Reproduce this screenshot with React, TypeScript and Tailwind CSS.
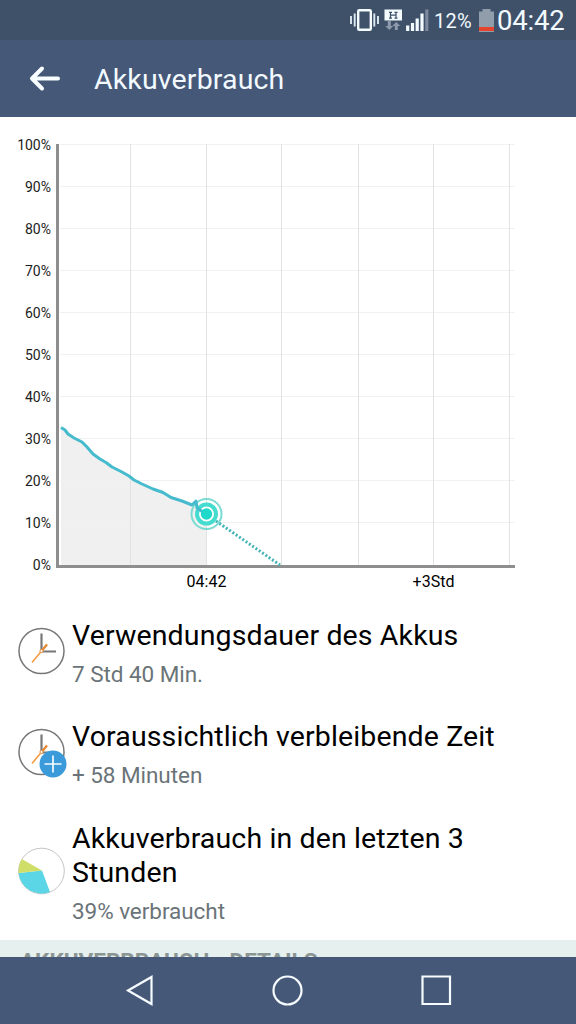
import type { ReactNode } from "react";

const levels = [100, 90, 80, 70, 60, 50, 40, 30, 20, 10, 0];
const gridX = [74.5, 150.5, 225.5, 302.5, 377.5, 453.5];

const StatusBar = () => {
    return (
        <div className="flex h-10 shrink-0 items-center bg-[#3f5069] pl-[350px] text-[#f2faff]">
            <svg width="79" height="26" viewBox="0 0 79 26" className="shrink-0">
                <rect x="8.2" y="3.2" width="12.6" height="19.6" rx="1" fill="none" stroke="#f4fbff" strokeWidth="2.4" />
                <path d="M1 9v8M4.7 6.5v13M24.3 6.5v13M28 9v8" stroke="#dce8f2" strokeWidth="1.9" />
                <rect x="34.5" y="2.5" width="17.5" height="11" fill="#f4fbff" />
                <path d="M40.5 5v6.5M46 5v6.5M40.5 8.2h5.5M39 5.3h3M39 11.2h3M44.5 5.3h3M44.5 11.2h3" stroke="#3f5069" strokeWidth="1.2" />
                <path d="M37.8 14v5h-2.5l4 4 4-4h-2.5v-5zM44.8 23v-4h-2.5l4-4 4 4h-2.5v4z" fill="#8d9aab" />
                <path d="M57.7 18.5V24M62.5 16v8M67.2 11.5V24M72 6.5V24" stroke="#f4fbff" strokeWidth="3.2" />
                <path d="M76.8 2.5V24" stroke="#7d8a9d" strokeWidth="3.2" />
            </svg>
            <span className="ml-[5px] mt-[2px] w-[45px] text-[20px] tracking-[0.2px]">12%</span>
            <svg width="15" height="24" viewBox="0 0 15 24" className="shrink-0">
                <path d="M3.5 1h8v2.5H15V24H0V3.5h3.5z" fill="#919daa" />
                <path d="M0 19h15v4H0z" fill="#e5432c" />
            </svg>
            <span className="ml-[3px] mt-[2px] text-[27.5px] tracking-[-0.2px]">04:42</span>
        </div>
    );
};

const Header = () => {
    return (
        <header className="flex h-[77px] shrink-0 items-center bg-[#465877] pl-7 text-[#f2faff]">
            <svg width="34" height="28" viewBox="0 0 34 28" fill="none" stroke="#f8fdff" strokeWidth="4" strokeLinecap="round" strokeLinejoin="round">
                <path d="M30 13.5H4M14 3.5L4 13.5L14 23.5" />
            </svg>
            <h1 className="ml-8 mt-[4px] text-[28.5px] tracking-[0.15px]">Akkuverbrauch</h1>
        </header>
    );
};

const BatteryChart = () => {
    return (
        <section className="h-[502px] shrink-0 pt-2 text-[14px] text-[#1c1c1c]">
            <div className="flex h-[445px]">
                <div className="flex w-[51px] flex-col text-right">
                    {levels.map((level) => (
                        <span key={level} className="h-[42px] shrink-0 leading-[41px]">
                            {level}%
                        </span>
                    ))}
                </div>
                <svg width="460" height="424" viewBox="0 0 460 424" fill="none" className="ml-[5px] mt-[19px] shrink-0">
                    <path d="M5 284.5L12 291L26 298.5L39 312L55 322L75 334L95 344L115 353L138 361L150 370V421H5z" fill="#f0f0f0" />
                    {levels.slice(0, 10).map((level, i) => (
                        <path key={level} d={`M4 ${i * 42 + 0.5}H459`} stroke="#f1f1f1" />
                    ))}
                    {gridX.map((x) => (
                        <path key={x} d={`M${x} 0V421`} stroke="#e2e2e2" />
                    ))}
                    <path d="M1.5 0V422.5H459" stroke="#8e8e8e" strokeWidth="3" />
                    <path d="M160 377L224 421" stroke="#43b4b7" strokeWidth="3" strokeDasharray="2 2" />
                    <circle cx="150.5" cy="370" r="15" stroke="#79dbd1" strokeWidth="2" />
                    <circle cx="150.5" cy="370" r="9.5" fill="#fff" stroke="#43dccf" strokeWidth="4" />
                    <path
                        d="M5 283.5L9 286L12 290L18 294L26 298L31 303L37 310L44 315L50 318.5L56 323L65 327.5L73 332L78 336L86 340L97 345L107 348.5L115 353.5L126 357L136 361L140 357L141 364L150 370"
                        stroke="#45bbcd"
                        strokeWidth="3"
                        strokeLinejoin="round"
                    />
                    <circle cx="150.5" cy="370" r="5.7" fill="#1fd9cb" />
                </svg>
            </div>
            <div className="flex pl-[151px] text-[16px] leading-6 text-black">
                <span className="w-[111px] text-center">04:42</span>
                <span className="ml-[116px] w-[111px] text-center">+3Std</span>
            </div>
        </section>
    );
};

const ClockIcon = ({ plus }: { plus?: boolean }) => {
    return (
        <svg width="50" height="50" viewBox="0 0 50 50" fill="none">
            <circle cx="23.5" cy="24" r="22.5" stroke="#777" strokeWidth="1.5" />
            <path d="M23.5 6.5V24.5H38" stroke="#777" strokeWidth="2.2" />
            <path d="M14 35.5L29 17.5" stroke="#f29a3c" strokeWidth="1.5" />
            <path d="M24 23.5L29 17.5" stroke="#e58a36" strokeWidth="2.3" />
            <circle cx="23.5" cy="24" r="1.6" fill="#fff" stroke="#e88f3c" />
            {plus && (
                <>
                    <circle cx="35" cy="36" r="13.5" fill="#3b9ad9" />
                    <path d="M35 27.5V44.5M26.5 36H43.5" stroke="#f6fcff" strokeWidth="1.7" />
                </>
            )}
        </svg>
    );
};

const PieIcon = () => {
    return (
        <svg width="50" height="50" viewBox="0 0 50 50">
            <circle cx="23.5" cy="24" r="22.8" fill="#fff" stroke="#aaa" strokeWidth="0.7" />
            <path d="M24 23.5L32 45A23 23 0 0 1 .6 26z" fill="#5bd6e6" />
            <path d="M24 23.5L.6 26A23 23 0 0 1 3.8 12z" fill="#cfde68" />
        </svg>
    );
};

interface InfoRowProps {
    icon: ReactNode;
    title: string;
    value: string;
}

const InfoRow = ({ icon, title, value }: InfoRowProps) => {
    return (
        <div className="flex items-center gap-x-[4px] pl-[18px]">
            <div className="-mt-[3px] shrink-0">{icon}</div>
            <div className="w-[440px]">
                <h2 className="text-[28.5px] leading-[34px] tracking-[0.13px] text-black">{title}</h2>
                <p className="mt-[7px] text-[22.5px] leading-7 tracking-[-0.05px] text-[#6a7478]">{value}</p>
            </div>
        </div>
    );
};

const NavBar = () => {
    return (
        <nav className="h-[67px] shrink-0 bg-[#465877]">
            <svg width="576" height="67" viewBox="0 0 576 67" fill="none" stroke="#f5fbff" strokeWidth="2.2">
                <path d="M128 33.5L151.5 20V47z" />
                <circle cx="287.5" cy="33.5" r="14" />
                <path d="M422.5 19.5h27.5v27.5h-27.5z" />
            </svg>
        </nav>
    );
};

export default function App() {
    return (
        <div className="flex h-[1024px] w-[576px] flex-col overflow-hidden bg-white font-['Roboto',sans-serif]">
            <StatusBar />
            <Header />
            <BatteryChart />
            <main className="flex h-[321px] shrink-0 flex-col gap-y-[32.3px]">
                <InfoRow icon={<ClockIcon />} title="Verwendungsdauer des Akkus" value="7 Std 40 Min." />
                <InfoRow icon={<ClockIcon plus />} title="Voraussichtlich verbleibende Zeit" value="+ 58 Minuten" />
                <InfoRow icon={<PieIcon />} title="Akkuverbrauch in den letzten 3 Stunden" value="39% verbraucht" />
            </main>
            {/* list header, scrolled under the nav bar */}
            <div className="h-[17px] shrink-0 overflow-hidden bg-[#e5f0ef] pl-5 pt-[6px]">
                <p className="whitespace-nowrap text-[22.5px] font-bold leading-[30px] text-[#8b9594]">AKKUVERBRAUCH - DETAILS</p>
            </div>
            <NavBar />
        </div>
    );
}
